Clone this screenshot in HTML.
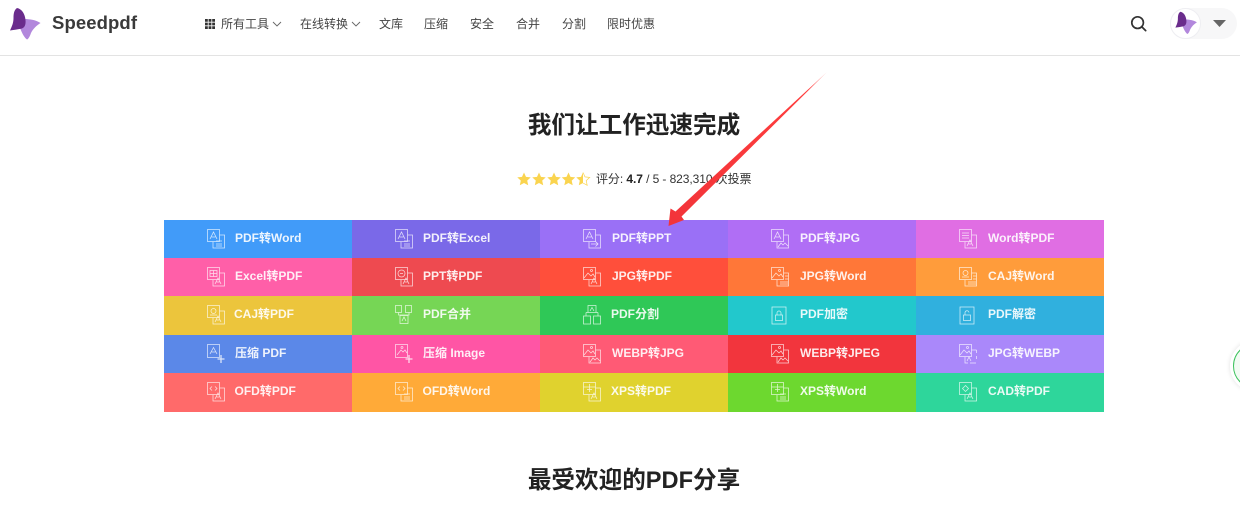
<!DOCTYPE html>
<html lang="zh">
<head>
<meta charset="utf-8">
<title>Speedpdf</title>
<style>
html,body{margin:0;padding:0;background:#fff}
body{width:1240px;height:523px;overflow:hidden;position:relative;font-family:"Liberation Sans","Noto Sans CJK SC",sans-serif;color:#333}
.a{position:absolute;white-space:nowrap}
.nav{position:absolute;top:16px;font-size:12px;line-height:16px;color:#444;white-space:nowrap}
.h{position:absolute;left:0;width:1268px;text-align:center;font-size:23.6px;line-height:32px;font-weight:700;color:#222}
.c{position:absolute;width:188px;height:39px;overflow:hidden}
.c svg{position:absolute;left:43px;top:9px;width:18px;height:20px;fill:none;stroke:#fff;stroke-width:.75;opacity:.78}
.c span{position:absolute;left:71px;top:0;line-height:37px;font-size:12px;font-weight:700;color:#fff;white-space:nowrap;opacity:.9}
.r{left:72px !important}
</style>
</head>
<body>
<svg width="0" height="0" style="position:absolute">
<defs>
<symbol id="pa" viewBox="0 0 18 20"><path d="M.5.5h12v12H.5z"/><path d="M3 10 6.500 3 10 10M4.500 8h4"/></symbol>
<symbol id="im" viewBox="0 0 18 20"><path d="M.5.5h12v12H.5z"/><path d="M1 11l4-5 3 3 2-2 2 3"/><circle cx="8.500" cy="3.500" r="1"/></symbol>
<symbol id="ba" viewBox="0 0 18 20"><path d="M12.500 6h5v13H6v-6"/><path d="M8 17l3-6 3 6M9.500 15h3"/></symbol>
<symbol id="bw" viewBox="0 0 18 20"><path d="M12.500 6h5v13H6v-6"/><path d="M9 15h6M9 12h6M9 17h6"/></symbol>
<symbol id="bi" viewBox="0 0 18 20"><path d="M12.500 6h5v13H6v-6"/><path d="M7 18l3-4 2 2 2-2 3 3"/></symbol>
</defs>
</svg>

<!-- header -->
<svg class="a" style="left:8px;top:7px" width="34" height="34" viewBox="8 7 34 34"><path d="M24 19C30 19 36 20 40.500 23 36 26 33 29 31 33 30 36 28.500 39 27 39.500 24.500 38 22 33 20 28 24 27 26 24 24 19z" fill="#b287dc"/><path d="M17 8C22 9 25 14 25.500 20 26 25 24.500 28 21 28.700 17 29.500 13 30 10 30.500 12 26 13.500 23 13.500 18 13.500 14 14 10 17 8z" fill="#6a2c8c"/></svg>
<div class="a" style="left:52px;top:12px;font-size:18.500px;line-height:22px;font-weight:700;letter-spacing:.1px;color:#3a3a3a">Speedpdf</div>
<svg class="a" style="left:205px;top:19px" width="10" height="10" viewBox="0 0 10 10" fill="#333"><path d="M0 0h2.800v2.800H0zM3.600 0h2.800v2.800H3.600zM7.200 0h2.800v2.800H7.200zM0 3.600h2.800v2.800H0zM3.600 3.600h2.800v2.800H3.600zM7.200 3.600h2.800v2.800H7.200zM0 7.200h2.800v2.800H0zM3.600 7.200h2.800v2.800H3.600zM7.200 7.200h2.800v2.800H7.200z"/></svg>
<div class="nav" style="left:221px">所有工具</div>
<svg class="a" style="left:272px;top:21px" width="10" height="7" viewBox="0 0 10 7" fill="none" stroke="#666" stroke-width=".9"><path d="M1 1l4 4 4-4"/></svg>
<div class="nav" style="left:300px">在线转换</div>
<svg class="a" style="left:351px;top:21px" width="10" height="7" viewBox="0 0 10 7" fill="none" stroke="#666" stroke-width=".9"><path d="M1 1l4 4 4-4"/></svg>
<div class="nav" style="left:379px">文库</div>
<div class="nav" style="left:424px">压缩</div>
<div class="nav" style="left:470px">安全</div>
<div class="nav" style="left:516px">合并</div>
<div class="nav" style="left:562px">分割</div>
<div class="nav" style="left:607px">限时优惠</div>

<svg class="a" style="left:1130px;top:15px" width="17" height="17" viewBox="0 0 19 19" fill="none" stroke="#333" stroke-width="1.900"><circle cx="8.500" cy="8.500" r="6.500"/><path d="M13 13l4.500 4.500" stroke-linecap="round"/></svg>
<div class="a" style="left:1170px;top:8px;width:67px;height:31px;border-radius:16px;background:#f7f7f8"></div>
<div class="a" style="left:1170px;top:8px;width:29px;height:29px;border-radius:50%;background:#fff;border:1px solid #eeeef2"></div>
<svg class="a" style="left:1174px;top:11px" width="24" height="24" viewBox="8 7 34 34"><path d="M24 19C30 19 36 20 40.500 23 36 26 33 29 31 33 30 36 28.500 39 27 39.500 24.500 38 22 33 20 28 24 27 26 24 24 19z" fill="#b287dc"/><path d="M17 8C22 9 25 14 25.500 20 26 25 24.500 28 21 28.700 17 29.500 13 30 10 30.500 12 26 13.500 23 13.500 18 13.500 14 14 10 17 8z" fill="#6a2c8c"/></svg>
<svg class="a" style="left:1213px;top:20px" width="13" height="7" viewBox="0 0 13 7"><path d="M0 0h13L6.500 7z" fill="#666"/></svg>
<div class="a" style="left:0;top:55px;width:1240px;height:1px;background:#e3e3e3"></div>

<!-- titles -->
<div class="h" style="top:110px">我们让工作迅速完成</div>
<svg class="a" style="left:517px;top:172px" width="74" height="14" viewBox="0 0 74 14">
<g fill="#fad44f">
<path d="M7 .5l2 4.400 4.700.5-3.500 3.200 1 4.700L7 11l-4.200 2.300 1-4.700L.3 5.400 5 4.900z"/>
<path d="M22 .5l2 4.400 4.700.5-3.500 3.200 1 4.700L22 11l-4.200 2.300 1-4.700-3.500-3.200 4.700-.5z"/>
<path d="M37 .5l2 4.400 4.700.5-3.500 3.200 1 4.700L37 11l-4.200 2.300 1-4.700-3.500-3.200 4.700-.5z"/>
<path d="M51.500 .5l2 4.400 4.700.5-3.500 3.200 1 4.700-4.200-2.300-4.200 2.300 1-4.700-3.500-3.200 4.700-.5z"/>
<path d="M66 .5V11l-4.200 2.300 1-4.700-3.500-3.200 4.700-.5z"/>
</g>
<path d="M66 .5l2 4.400 4.700.5-3.500 3.200 1 4.700L66 11" fill="none" stroke="#fad44f" stroke-width=".7"/>
</svg>
<div class="a" style="left:596px;top:171px;font-size:12px;line-height:16px;color:#333;letter-spacing:-.08px">评分: <b style="color:#222">4.7</b> / 5 - 823,310 次投票</div>

<!-- grid -->
<div class="c" style="left:164px;top:220px;background:#419bf9"><svg><use href="#pa"/><use href="#bw"/></svg><span>PDF转Word</span></div>
<div class="c" style="left:352px;top:220px;background:#7a69e8"><svg><use href="#pa"/><use href="#bw"/></svg><span>PDF转Excel</span></div>
<div class="c" style="left:540px;top:220px;background:#9a70f6"><svg><use href="#pa"/><path d="M12.500 6h5v13H6v-6M8 15h7M12.500 12.500 15 15l-2.500 2.500"/></svg><span class="r">PDF转PPT</span></div>
<div class="c" style="left:728px;top:220px;background:#b06ef5"><svg><use href="#pa"/><use href="#bi"/></svg><span class="r">PDF转JPG</span></div>
<div class="c" style="left:916px;top:220px;background:#e06ee3"><svg><path d="M.5.5h12v12H.5zM3 4h7M3 6.500h7M3 9h7"/><use href="#ba"/></svg><span class="r">Word转PDF</span></div>

<div class="c" style="left:164px;top:258px;background:#ff5fa8"><svg><path d="M.5.5h12v12H.5zM3 3.500h7v6H3zM3 6.500h7M6.500 3.500v6"/><use href="#ba"/></svg><span>Excel转PDF</span></div>
<div class="c" style="left:352px;top:258px;background:#ee4a50"><svg><path d="M.5.5h12v12H.5z"/><circle cx="6.500" cy="6.500" r="3.500"/><path d="M5 6.500h3"/><use href="#ba"/></svg><span>PPT转PDF</span></div>
<div class="c" style="left:540px;top:258px;background:#ff4f3b"><svg><use href="#im"/><use href="#ba"/></svg><span class="r">JPG转PDF</span></div>
<div class="c" style="left:728px;top:258px;background:#ff7738"><svg><use href="#im"/><path d="M12.500 6h5v13H6v-6M14 9h3.500M14 12h3.500M9 15h8M9 17h8"/></svg><span class="r">JPG转Word</span></div>
<div class="c" style="left:916px;top:258px;background:#ff9c3b"><svg><path d="M.5.5h12v12H.5z"/><circle cx="6.500" cy="6" r="2.500"/><path d="M3 10h7M12.500 6h5v13H6v-6M14 9h3.500M14 12h3.500M9 15h8M9 17h8"/></svg><span class="r">CAJ转Word</span></div>

<div class="c" style="left:164px;top:296px;background:#ecc53c"><svg><path d="M.5.5h12v12H.5z"/><circle cx="6.500" cy="6" r="2.500"/><path d="M3 10h7"/><use href="#ba"/></svg><span style="left:70px">CAJ转PDF</span></div>
<div class="c" style="left:352px;top:296px;background:#76d655"><svg><path d="M.5.5h6v7h-6zM10.500.5h6v7h-6zM3.500 7.500V10H14V7.500M5 10.500h8v8H5z"/><path d="M7 16l2-4 2 4"/></svg><span>PDF合并</span></div>
<div class="c" style="left:540px;top:296px;background:#2fc857"><svg><path d="M5 .5h8v7H5zM7 6l2-3.500L11 6M3 7.500h12M3 7.500V11M15 7.500V11M.5 11h7v8h-7zM10.500 11h7v8h-7z"/></svg><span style="left:71px">PDF分割</span></div>
<div class="c" style="left:728px;top:296px;background:#22c8cc"><svg style="width:16px"><path d="M1 2h14v17H1z"/><path d="M4.500 10h7v5.500h-7zM6 10V8a2 2 0 0 1 4 0v2"/></svg><span class="r">PDF加密</span></div>
<div class="c" style="left:916px;top:296px;background:#30b0de"><svg style="width:16px"><path d="M1 2h14v17H1z"/><path d="M4.500 10h7v5.500h-7zM6 10V8a2 2 0 0 1 4-.5"/></svg><span class="r">PDF解密</span></div>

<div class="c" style="left:164px;top:335px;background:#5b88e8"><svg><path d="M.5.5h12v13H.5z"/><path d="M3 10 6.500 3.500 10 10M4.500 8h4"/><path d="M14 11v8M10.500 15h7" stroke-width="1.300"/></svg><span>压缩 PDF</span></div>
<div class="c" style="left:352px;top:335px;background:#ff55a5"><svg><path d="M.5.5h12v13H.5z"/><path d="M2 11l4-5 2 2 2-2 2 3"/><circle cx="7" cy="3.500" r="1"/><path d="M14 11v8M10.500 15h7" stroke-width="1.300"/></svg><span>压缩 Image</span></div>
<div class="c" style="left:540px;top:335px;background:#ff5a75"><svg><use href="#im"/><path d="M12.500 6h5v13H6v-6M7 18l3-4 2 2 2-2 3 3"/></svg><span class="r">WEBP转JPG</span></div>
<div class="c" style="left:728px;top:335px;background:#f2353d"><svg><use href="#im"/><path d="M12.500 6h5v13H6v-6M7 18l3-4 2 2 2-2 3 3"/></svg><span class="r">WEBP转JPEG</span></div>
<div class="c" style="left:916px;top:335px;background:#aa88fa"><svg><use href="#im"/><path d="M12.500 6h5M17.500 6v3M17.500 12v3M6 13v6h3M11 19h6"/><path d="M8 17l2-4 2 4"/></svg><span class="r">JPG转WEBP</span></div>

<div class="c" style="left:164px;top:373px;background:#ff6a6a"><svg><path d="M.5.5h12v12H.5zM5 4.500 3 6.500l2 2M8 4.500l2 2-2 2"/><use href="#ba"/></svg><span style="left:70.500px">OFD转PDF</span></div>
<div class="c" style="left:352px;top:373px;background:#ffaa38"><svg><path d="M.5.5h12v12H.5zM5 4.500 3 6.500l2 2M8 4.500l2 2-2 2"/><use href="#bw"/></svg><span style="left:70.500px">OFD转Word</span></div>
<div class="c" style="left:540px;top:373px;background:#e0d22e"><svg><path d="M.5.5h12v12H.5zM.5 5h12M6.500 2v8M4 7.500h5"/><use href="#ba"/></svg><span>XPS转PDF</span></div>
<div class="c" style="left:728px;top:373px;background:#6dd82f"><svg><path d="M.5.5h12v12H.5zM.5 5h12M6.500 2v8M4 7.500h5"/><use href="#bw"/></svg><span class="r">XPS转Word</span></div>
<div class="c" style="left:916px;top:373px;background:#2ed69b"><svg><path d="M.5.5h12v12H.5zM6.500 3.500l3 3-3 3-3-3z"/><use href="#ba"/></svg><span class="r">CAD转PDF</span></div>

<!-- red arrow -->
<svg class="a" style="left:660px;top:65px" width="175" height="170" viewBox="660 65 175 170">
<defs><linearGradient id="g" x1="827" y1="72" x2="669" y2="226" gradientUnits="userSpaceOnUse"><stop offset="0" stop-color="#f33" stop-opacity=".35"/><stop offset=".12" stop-color="#f33" stop-opacity=".95"/><stop offset="1" stop-color="#f2343a"/></linearGradient></defs>
<path d="M827 72 681.500 216.500 684 220 668.500 226 670.500 208.500 675.500 211.500z" fill="url(#g)"/>
</svg>

<!-- floating widget -->
<div class="a" style="left:1230px;top:340px;width:52px;height:52px;border-radius:50%;background:#fff;box-shadow:0 0 5px rgba(0,0,0,.12)"></div>
<div class="a" style="left:1233px;top:343px;width:44px;height:44px;border-radius:50%;background:#f2fbf3;border:1px solid #3bc25c"></div>

<div class="h" style="top:465px">最受欢迎的PDF分享</div>
</body>
</html>
